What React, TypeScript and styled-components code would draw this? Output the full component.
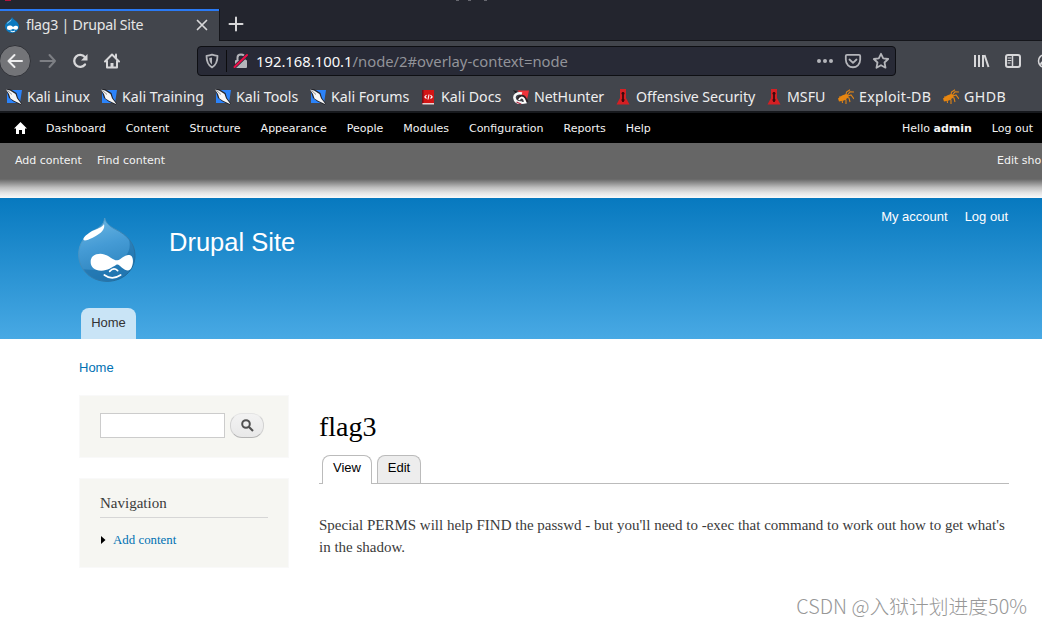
import React from "react";
import styled, { createGlobalStyle } from "styled-components";

const Global = createGlobalStyle`
  * { box-sizing: border-box; }
  body { margin: 0; background: #fff; overflow: hidden; }
`;
const sans = `"Liberation Sans", Arial, sans-serif`;
const serif = `"Liberation Serif", Georgia, serif`;
const ui = `"Noto Sans", sans-serif`;

const Page = styled.div`
  position: relative;
  width: 1042px;
  height: 626px;
  overflow: hidden;
  white-space: nowrap;
`;

/* Browser window */
const TabStrip = styled.div`
  display: flex;
  height: 41px;
  padding-top: 9px;
  background: #23252e;
  border-bottom: 1px solid #15161b;
  font-family: ${ui};
`;
const BrowserTab = styled.div`
  display: flex;
  align-items: center;
  width: 219px;
  height: 32px;
  padding: 0 10px 2px 4px;
  background: #42454c;
  border-top: 2px solid #2a7af5;
  color: #e6e6e6;
`;
const TabTitle = styled.span`
  flex: 1;
  margin-left: 6px;
  font-size: 14.2px;
  letter-spacing: -0.25px;
  line-height: 28px;
`;
const NewTab = styled.div`
  width: 34px;
  height: 31px;
  padding: 7px 0 0 8px;
  border-left: 1px solid #15161b;
  line-height: 0;
`;
const WindowTitle = styled.div`
  position: absolute;
  top: 0;
  left: 4px;
  svg { display: block; }
`;
const NavBar = styled.div`
  display: flex;
  align-items: center;
  height: 41px;
  padding-bottom: 1px;
  background: #42454c;
  font-family: ${ui};
`;
const NavButtons = styled.div`
  display: flex;
  flex: none;
  align-items: center;
  width: 197px;
`;
const BackButton = styled.div`
  display: grid;
  place-items: center;
  width: 32px;
  height: 32px;
  margin: 0 7px 0 -1px;
  border: 1px solid #303238;
  border-radius: 50%;
  background: #737478;
`;
const NavIcon = styled.div`
  width: 20px;
  height: 20px;
  margin-right: 12px;
`;
const UrlBar = styled.div`
  display: flex;
  flex: none;
  align-items: center;
  width: 699px;
  height: 30px;
  padding: 0 4px 0 6px;
  border: 1px solid #0e0f13;
  border-radius: 4px;
  background: #282a36;
`;
const Divider = styled.i`
  width: 1px;
  height: 22px;
  margin: 0 5px 0 6px;
  background: #0c0c0e;
`;
const UrlText = styled.div`
  flex: 1;
  margin-left: 6px;
  font-size: 14.8px;
  line-height: 28px;
  color: #929399;
  b { font-weight: 400; color: #f9f9fa; }
`;
const UrlActions = styled.div`
  display: flex;
  gap: 8px;
`;
const RightTools = styled.div`
  display: flex;
  flex: none;
  gap: 12px;
  margin-left: 75px;
`;
const Bookmarks = styled.div`
  display: flex;
  height: 31px;
  padding-left: 6px;
  background: #42454c;
  border-bottom: 2px solid #17191d;
  font-family: ${ui};
  font-size: 14.2px;
  line-height: 29px;
  color: #eeeeef;
`;
const Bookmark = styled.div<{ $w: number; $spacing?: number }>`
  display: flex;
  align-items: center;
  gap: 5px;
  flex: 0 0 ${(p) => p.$w}px;
  width: ${(p) => p.$w}px;
  letter-spacing: ${(p) => p.$spacing ?? 0}px;
`;

/* Drupal admin toolbar */
const AdminBar = styled.div`
  display: flex;
  align-items: center;
  height: 30px;
  padding: 0 9px 0 14px;
  background: #000;
  color: #f3f3f3;
  font: 11px/30px "DejaVu Sans", sans-serif;
`;
const AdminMenu = styled.div`
  display: flex;
  flex: 1;
  gap: 20px;
  margin-left: 19px;
  padding-top: 1px;
`;
const AdminUser = styled.div`
  display: flex;
  gap: 20px;
  padding-top: 1px;
`;
const Shortcuts = styled.div`
  display: flex;
  gap: 15px;
  height: 36px;
  padding-left: 15px;
  background: #666;
  color: #f3f3f3;
  font: 11px/35px "DejaVu Sans", sans-serif;
`;
const EditShortcuts = styled.span`
  width: 45px;
  margin-left: auto;
`;
const BarShadow = styled.div`
  height: 19px;
  background: linear-gradient(#666 0%, #8d8d8d 20%, #bebebe 45%, #e4e4e4 72%, #fafafa 100%);
`;

/* Site header */
const Header = styled.header`
  display: flex;
  flex-direction: column;
  height: 141px;
  padding: 0 34px 0 78px;
  background: linear-gradient(#0779bf, #48a9e4);
  font-family: ${sans};
`;
const HeaderTop = styled.div`
  display: flex;
  height: 110px;
`;
const LogoBox = styled.div`
  width: 91px;
  padding-top: 19px;
  svg { display: block; }
`;
const SiteName = styled.div`
  flex: 1;
  padding-top: 29px;
  font-size: 25.5px;
  line-height: 30px;
  color: #fffeff;
`;
const AccountLinks = styled.div`
  display: flex;
  gap: 17px;
  padding-top: 11px;
  font-size: 13px;
  line-height: 16px;
  color: #fffeff;
`;
const MainTab = styled.div`
  width: 55px;
  height: 31px;
  margin-left: 3px;
  border-radius: 8px 8px 0 0;
  background: #c9e4f6;
  color: #333;
  font-size: 13px;
  line-height: 29px;
  text-align: center;
`;

/* Content */
const Breadcrumb = styled.div`
  height: 56px;
  padding: 20px 0 0 79px;
  color: #0071b3;
  font: 13px/17px ${sans};
`;
const Columns = styled.div`
  display: flex;
  gap: 30px;
  padding: 0 33px 0 79px;
`;
const Sidebar = styled.aside`
  display: flex;
  flex-direction: column;
  gap: 20px;
  width: 210px;
`;
const Block = styled.section<{ $h: number }>`
  height: ${(p) => p.$h}px;
  padding: 0 20px;
  border: 1px solid #f9f9f9;
  background: #f6f6f2;
`;
const SearchRow = styled.div`
  display: flex;
  gap: 5px;
  padding-top: 17px;
`;
const SearchInput = styled.input`
  width: 125px;
  height: 25px;
  padding: 0;
  border: 1px solid #ccc;
  background: #fff;
`;
const SearchButton = styled.div`
  width: 34px;
  height: 25px;
  padding: 5px 0 0 10px;
  border: 1px solid #e4e4e4;
  border-bottom-color: #b4b4b4;
  border-left-color: #d2d2d2;
  border-right-color: #d2d2d2;
  border-radius: 12px;
  background: linear-gradient(#f3f3f3, #e8e8e8);
  line-height: 0;
`;
const BlockTitle = styled.h2`
  height: 39px;
  margin: 0;
  padding-top: 14px;
  border-bottom: 1px solid #d6d6d6;
  color: #3b3b3b;
  font: 400 15px/20px ${serif};
`;
const MenuItem = styled.div`
  display: flex;
  align-items: center;
  gap: 7px;
  padding-top: 12px;
  color: #0071b3;
  font: 12.9px/20px ${serif};
`;
const Main = styled.main`
  width: 690px;
  font-family: ${serif};
`;
const Title = styled.h1`
  height: 60px;
  margin: 0;
  padding-top: 16px;
  font-size: 28px;
  line-height: 32px;
  font-weight: 400;
  color: #000;
`;
const Tabs = styled.div`
  display: flex;
  gap: 5px;
  height: 29px;
  padding-left: 3px;
  border-bottom: 1px solid #bbb;
`;
const PageTab = styled.div<{ $w: number; $active?: boolean }>`
  width: ${(p) => p.$w}px;
  height: ${(p) => (p.$active ? 29 : 28)}px;
  border: 1px solid #bbb;
  border-bottom: 0;
  border-radius: 8px 8px 0 0;
  background: ${(p) => (p.$active ? "#fff" : "#ededed")};
  color: #000;
  font: 13px/23px ${sans};
  text-align: center;
`;
const Body = styled.p`
  margin: 30px 0 0;
  color: #3b3b3b;
  font-size: 15px;
  line-height: 22px;
`;
const Watermark = styled.div`
  position: absolute;
  right: 15px;
  bottom: 5px;
  color: #979797;
  font: 300 19.8px/30px "Noto Sans CJK SC", sans-serif;
`;

const dropPath =
  "M98 18C101 33 113 43 130 52C165 68 189 95 189 130C189 176 152 208 105 208C58 208 20 175 20 127C20 95 38 72 60 58C80 48 96 40 98 18Z";
const maskPath =
  "M56 150C56 132 70 125 85 125C107 125 122 146 136 145C148 142 158 127 172 129C187 131 184 158 178 168C172 180 160 175 150 167C142 160 138 155 132 159C120 166 107 176 88 176C68 176 56 166 56 150Z";

const DrupalLogo = () => (
  <svg width="58" height="65" viewBox="18 15 174 195">
    <defs>
      <linearGradient id="drop" x1="0" y1="0" x2="0.25" y2="1">
        <stop offset="0" stopColor="#6fb9e4" />
        <stop offset=".5" stopColor="#459bd5" />
        <stop offset="1" stopColor="#2c83bd" />
      </linearGradient>
      <linearGradient id="edge" x1="0" y1="0" x2="1" y2="1">
        <stop offset="0" stopColor="#5fa9d6" />
        <stop offset="1" stopColor="#155d8f" />
      </linearGradient>
      <clipPath id="shape"><path d={dropPath} /></clipPath>
    </defs>
    <path d={dropPath} fill="url(#drop)" />
    <g clipPath="url(#shape)">
      <path d="M165 65C185 110 165 135 140 147C105 180 60 175 22 170L60 212H192V75Z" fill="#1b6ea8" opacity=".6" />
    </g>
    <path d={dropPath} fill="none" stroke="url(#edge)" strokeWidth="3" />
    <path d="M96 36C100 50 90 64 62 77C47 83 35 90 34 81C37 72 53 60 68 54C84 47 92 45 96 36Z" fill="#fff" />
    <path d={maskPath} fill="#fff" />
    <path d="M113 178Q125 165 137 176M97 189Q120 206 146 189" fill="none" stroke="#fff" strokeWidth="5" strokeLinecap="round" />
  </svg>
);
const Favicon = () => (
  <svg width="16" height="16" viewBox="0 0 16 16">
    <path d="M8 0C9 3 15 4.500 15 9.300C15 13 11.500 16 8 16S1 13 1 9.300C1 4.500 7 4 8 0Z" fill="#0b79bf" />
    <path d="M7.500 2C8 4 5 5 3 7C2.500 5.500 6 4 7.500 2Z" fill="#8dcbef" />
    <path d="M3 11C3 8 7 8 9 10C11 8.200 14.500 8 14 11C13.500 13.500 11 12.700 9 11.700C6.500 13.500 3 13.500 3 11Z" fill="#fff" />
    <path d="M6.500 14Q9 15.500 11 14" stroke="#fff" fill="none" />
  </svg>
);

const stroke = { fill: "none", stroke: "#d7d7d9", strokeWidth: 2, strokeLinecap: "round", strokeLinejoin: "round" } as const;
const gray = { ...stroke, stroke: "#b4b5ba", strokeWidth: 1.8 } as const;

type IconKind = "kali" | "docs" | "hunter" | "offsec" | "bug";
const BookmarkIcon = ({ kind }: { kind: IconKind }) => (
  <svg width="16" height="16" viewBox="0 0 16 16">
    {kind === "kali" && (
      <>
        <path d="M2 1H16L14 14H1V4Z" fill="#2b83fa" />
        <path d="M0 0H4L10.500 4L12 9L16 14.500L15 16L7.500 12.500L3 9Z" fill="#25262c" />
        <path d="M0 .5L4 1.500L9.500 5L11 9.200L15.500 15.200L8 11.800L4.500 9.500L3 5Z" fill="#f6f6f6" />
        <path d="M1.500 1.500L6 5.500" stroke="#77797f" strokeWidth=".8" />
      </>
    )}
    {kind === "docs" && (
      <>
        <path d="M2 1H14V15H2Z" fill="#d31515" />
        <path d="M2 1H3.500V14H2Z" fill="#7d0d16" />
        <path d="M2.500 14H14V15.500H2.500Z" fill="#e9d2d2" />
        <path d="M6.500 6L4.800 8L6.500 9.500M10.500 6L12.200 8L10.500 9.500M9 5.500L8 10.500" fill="none" stroke="#fff" strokeWidth="1.100" />
      </>
    )}
    {kind === "hunter" && (
      <>
        <path d="M4.500 1.500H16L13.500 13Z" fill="#f0323a" />
        <path d="M0 1L4 2.500L3.500 5Z" fill="#17171a" />
        <path d="M9 4.500C4 3.500 1 6 1.500 9C2 12.500 5 14 9 13.500" fill="none" stroke="#f7f7f7" strokeWidth="2.600" />
        <path d="M5 10.500C5.500 6.500 10 6 12 8.500L14.500 13" fill="none" stroke="#2a2226" strokeWidth="2.200" />
        <path d="M6 11C7 8 9.500 8 11 10L12.500 13.500L9 14" fill="none" stroke="#fff" strokeWidth="2" />
        <path d="M3.500 13L8 15" stroke="#b42740" strokeWidth="1.300" />
      </>
    )}
    {kind === "offsec" && (
      <>
        <path d="M5 0H11V9L14.500 15.500H1.500L5 9Z" fill="#d61f23" />
        <path d="M8 3V13" stroke="#2a0709" strokeWidth="1.600" />
        <path d="M6.500 4.500H9.500M6.500 11H9.500" fill="none" stroke="#380b0d" strokeWidth="1.500" />
      </>
    )}
    {kind === "bug" && (
      <>
        <path d="M0 9.500L4 6.500L8 5L11 6.500L9.500 9L6 11.500L1 12.500Z" fill="#e8860f" />
        <path d="M8 6L8.500 3L12 .7M9.500 6L12 2.800L16 3M10 7L13 6L16 10M8 8L11 9L12 13M6 9L8 11V15M4 10L4.500 14M3 8L1 8" fill="none" stroke="#e08417" strokeWidth="1.100" />
      </>
    )}
  </svg>
);

const bookmarks: [string, IconKind, number, number?][] = [
  ["Kali Linux", "kali", 95, -0.1],
  ["Kali Training", "kali", 114],
  ["Kali Tools", "kali", 95],
  ["Kali Forums", "kali", 110],
  ["Kali Docs", "docs", 93],
  ["NetHunter", "hunter", 102, -0.1],
  ["Offensive Security", "offsec", 151, -0.06],
  ["MSFU", "offsec", 72],
  ["Exploit-DB", "bug", 105, 0.3],
  ["GHDB", "bug", 80, 0.4],
];
const adminLinks = ["Dashboard", "Content", "Structure", "Appearance", "People", "Modules", "Configuration", "Reports", "Help"];

export default function App() {
  return (
    <Page>
      <Global />
      <TabStrip>
        <WindowTitle>
          <svg width="500" height="2" viewBox="0 0 500 2">
            <path d="M1 0H7" stroke="#b5153c" strokeWidth="2" />
            <path d="M452 0H455M464 0H467M480 0H483" stroke="#a9aab0" />
          </svg>
        </WindowTitle>
        <BrowserTab>
          <Favicon />
          <TabTitle>flag3 | Drupal Site</TabTitle>
          <svg width="14" height="14" viewBox="0 0 14 14"><path d="M2.500 2.500L11.500 11.500M11.500 2.500L2.500 11.500" {...stroke} strokeWidth="1.700" /></svg>
        </BrowserTab>
        <NewTab>
          <svg width="16" height="16" viewBox="0 0 16 16"><path d="M8 1.500V14.500M1.500 8H14.500" {...stroke} /></svg>
        </NewTab>
      </TabStrip>
      <NavBar>
        <NavButtons>
          <BackButton>
            <svg width="18" height="18" viewBox="0 0 18 18"><path d="M16 9H2.500M8.500 3L2.500 9L8.500 15" {...stroke} stroke="#ededee" /></svg>
          </BackButton>
          <NavIcon><svg width="20" height="20" viewBox="0 0 20 20"><path d="M2.500 10H17M11.500 4L17 10L11.500 16" {...stroke} stroke="#7d7f84" /></svg></NavIcon>
          <NavIcon>
            <svg width="20" height="20" viewBox="0 0 20 20">
              <path d="M15 13.500A6 6 0 1 1 14.800 6" {...stroke} strokeWidth="2.300" />
              <path d="M17.500 3V9.500H11Z" fill="#d7d7d9" />
            </svg>
          </NavIcon>
          <NavIcon>
            <svg width="20" height="20" viewBox="0 0 20 20">
              <path d="M3 10.500L10 3.500L17 10.500M5 9.500V16.500H15V9.500" {...stroke} />
              <path d="M10 16V12" {...stroke} strokeWidth="3" strokeLinecap="butt" />
              <path d="M14 3.500V6.500" {...stroke} />
            </svg>
          </NavIcon>
        </NavButtons>
        <UrlBar>
          <svg width="16" height="16" viewBox="0 0 16 16">
            <path d="M8 1.700C10 2.500 12 2.800 13.500 2.800C13.500 8 12.500 12 8 14.400C3.500 12 2.500 8 2.500 2.800C4 2.800 6 2.500 8 1.700Z" {...gray} />
            <path d="M8 4.500V11.500C6 10 5.300 8 5.200 5Z" fill="#b4b5ba" />
          </svg>
          <Divider />
          <svg width="18" height="18" viewBox="0 0 18 18">
            <path d="M5.500 9V5.500C5.500 1.500 12.500 1.500 12.500 5.500V9" {...gray} strokeWidth="2" />
            <rect x="3" y="8" width="12" height="8" rx="1" fill="#b4b5ba" />
            <path d="M2.500 15L15 3" stroke="#282a36" strokeWidth="3.600" />
            <path d="M2.500 15L15 3" stroke="#ed0f48" strokeWidth="2" strokeLinecap="round" />
          </svg>
          <UrlText><b>192.168.100.1</b>/node/2#overlay-context=node</UrlText>
          <UrlActions>
            <svg width="20" height="20" viewBox="0 0 20 20"><g fill="#b4b5ba"><circle cx="4" cy="10" r="2" /><circle cx="10" cy="10" r="2" /><circle cx="16" cy="10" r="2" /></g></svg>
            <svg width="20" height="20" viewBox="0 0 20 20"><path d="M4 3.800H16Q17.200 3.800 17.200 5V8.500C17.200 18.800 2.800 18.800 2.800 8.500V5Q2.800 3.800 4 3.800ZM6.500 8.500L10 11.800L13.500 8.500" {...gray} /></svg>
            <svg width="20" height="20" viewBox="0 0 20 20"><path d="M10 2.800L12.200 7.400L17.200 8L13.500 11.500L14.500 16.700L10 14.200L5.500 16.700L6.500 11.500L2.800 8L7.800 7.400Z" {...gray} /></svg>
          </UrlActions>
        </UrlBar>
        <RightTools>
          <svg width="20" height="20" viewBox="0 0 20 20"><path d="M4 4V16M8 4V16M12 4V16M13.500 4L17.500 16" {...stroke} strokeLinecap="butt" /></svg>
          <svg width="20" height="20" viewBox="0 0 20 20">
            <rect x="3" y="4" width="14" height="12" rx="2" {...stroke} />
            <path d="M9.500 4V16" {...stroke} strokeWidth="1.500" /><path d="M5 7H8M5 9.500H8M5 12H7" {...stroke} strokeWidth="1" />
          </svg>
          <svg width="20" height="20" viewBox="0 0 20 20"><circle cx="10" cy="10" r="6.500" {...stroke} strokeWidth="1.500" /><path d="M6 13Q7 10 10 11" {...stroke} /></svg>
        </RightTools>
      </NavBar>
      <Bookmarks>
        {bookmarks.map(([label, kind, w, spacing]) => (
          <Bookmark key={label} $w={w} $spacing={spacing}><BookmarkIcon kind={kind} />{label}</Bookmark>
        ))}
      </Bookmarks>
      <AdminBar>
        <svg width="13" height="12" viewBox="0 0 13 12"><path d="M6.500 0L13 6.500H11V12H8V8H5V12H2V6.500H0Z" fill="#fff" /></svg>
        <AdminMenu>{adminLinks.map((l) => <span key={l}>{l}</span>)}</AdminMenu>
        <AdminUser><span>Hello <b>admin</b></span><span>Log out</span></AdminUser>
      </AdminBar>
      <Shortcuts>
        <span>Add content</span><span>Find content</span><EditShortcuts>Edit sho</EditShortcuts>
      </Shortcuts>
      <BarShadow />
      <Header>
        <HeaderTop>
          <LogoBox><DrupalLogo /></LogoBox>
          <SiteName>Drupal Site</SiteName>
          <AccountLinks><span>My account</span><span>Log out</span></AccountLinks>
        </HeaderTop>
        <MainTab>Home</MainTab>
      </Header>
      <Breadcrumb>Home</Breadcrumb>
      <Columns>
        <Sidebar>
          <Block $h={63}>
            <SearchRow>
              <SearchInput />
              <SearchButton>
                <svg width="13" height="13" viewBox="0 0 13 13"><circle cx="5" cy="5" r="3.800" fill="none" stroke="#505050" strokeWidth="2" /><path d="M8 8L12 12" stroke="#505050" strokeWidth="2.200" /></svg>
              </SearchButton>
            </SearchRow>
          </Block>
          <Block $h={90}>
            <BlockTitle>Navigation</BlockTitle>
            <MenuItem><svg width="6" height="8" viewBox="0 0 6 8"><path d="M1 0L5.500 4L1 8Z" fill="#000" /></svg>Add content</MenuItem>
          </Block>
        </Sidebar>
        <Main>
          <Title>flag3</Title>
          <Tabs><PageTab $w={50} $active>View</PageTab><PageTab $w={44}>Edit</PageTab></Tabs>
          <Body>
            Special PERMS will help FIND the passwd - but you'll need to -exec that command to work out how to get what's
            <br />in the shadow.
          </Body>
        </Main>
      </Columns>
      <Watermark>CSDN @入狱计划进度50%</Watermark>
    </Page>
  );
}
